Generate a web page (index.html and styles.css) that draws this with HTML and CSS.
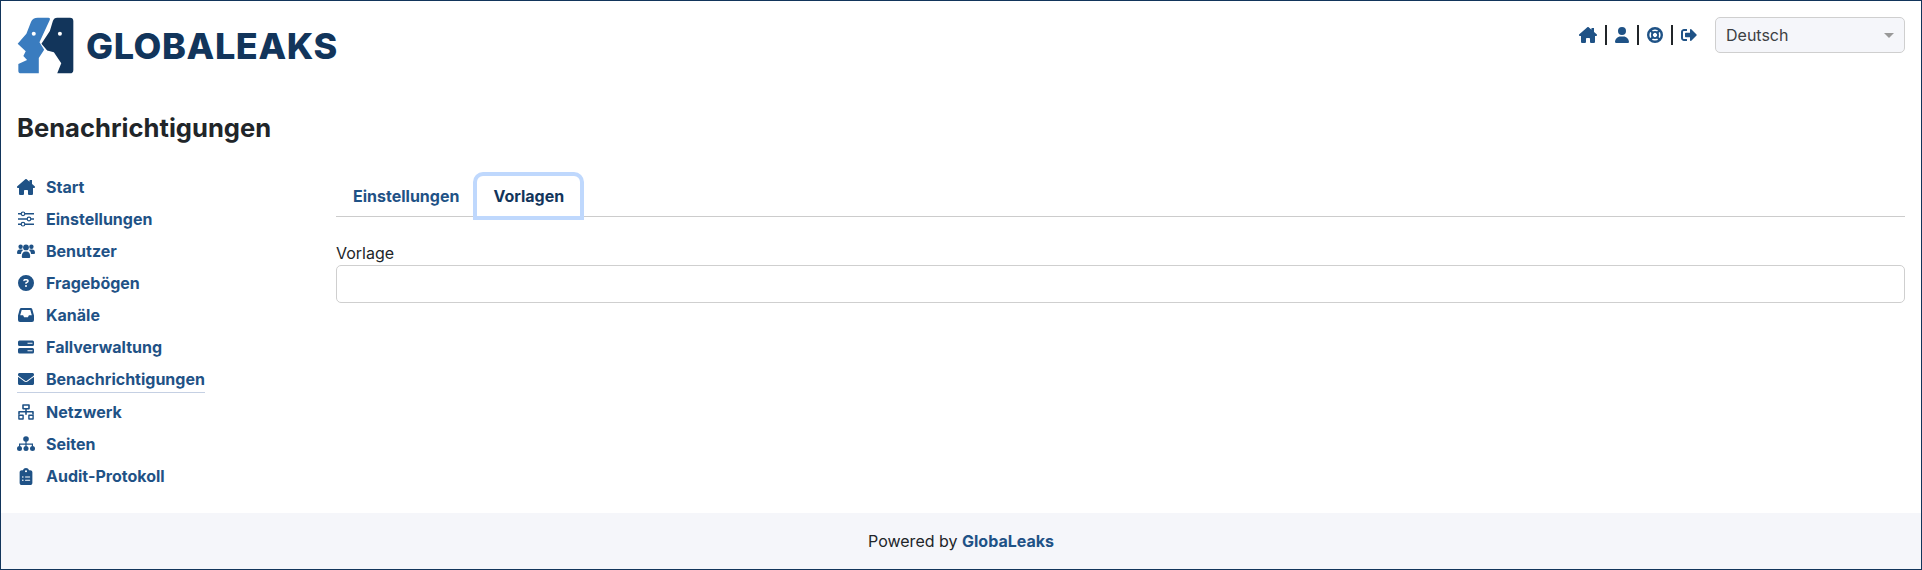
FILE: index.html
```html
<!DOCTYPE html>
<html lang="de">

<head>
    <meta charset="UTF-8">
    <meta name="viewport" content="width=device-width, initial-scale=1.0">
    <title>GlobaLeaks</title>
    <link rel="stylesheet" href="styles.css">
</head>

<body>
    <div class="page">
        <header class="topbar">
            <div class="brand">
                <svg class="brand-mark" viewBox="50 50 170 170">
                    <path fill="#3a7cbf" d="M112 52H144Q150 52 148 58L117 125L131 148L115 172V218H62Q54 218 54 210V190L80 178L69 166L76 152L52 130L78 100L92 64Q97 52 112 52Z"/>
                    <path fill="#12355b" d="M170 52H208Q218 52 218 62V208Q218 218 208 218H170L182 188L170 170L160 155L140 150L123 130L148 92L157 62Q160 52 170 52Z"/>
                    <circle cx="100" cy="100" r="6" fill="#fff"/>
                    <circle cx="178" cy="100" r="6" fill="#fff"/>
                </svg>
                <span class="brand-name">GLOBALEAKS</span>
            </div>
            <div class="topbar-right">
                <nav class="user-links">
                    <svg class="ico ico-home" viewBox="0 0 576 512"><path d="M400 32h80v140h-80zM575.800 255.500c0 18-15 32.100-32 32.100h-32l.7 160.200c0 2.700-.2 5.400-.5 8.100V472c0 22.100-17.900 40-40 40H456c-1.100 0-2.200 0-3.300-.1c-1.400 .1-2.800 .1-4.200 .1H416 392c-22.100 0-40-17.900-40-40V448 384c0-17.700-14.300-32-32-32H256c-17.700 0-32 14.300-32 32v64 24c0 22.100-17.900 40-40 40H160 128.100c-1.500 0-3-.1-4.500-.2c-1.200 .1-2.400 .2-3.600 .2H104c-22.100 0-40-17.900-40-40V360c0-.9 0-1.900 .1-2.800V287.600H32c-18 0-32-14-32-32.100c0-9 3-17 10-24L266.400 8c7-7 15-8 22-8s15 2 21 7L564.800 231.500c8 7 12 15 11 24z"/></svg>
                    <span class="sep"></span>
                    <svg class="ico ico-user" viewBox="0 0 448 512"><path d="M224 256A128 128 0 1 0 224 0a128 128 0 1 0 0 256zm-45.700 48C79.800 304 0 383.800 0 482.300C0 498.700 13.300 512 29.700 512H418.300c16.400 0 29.700-13.300 29.700-29.700C448 383.800 368.200 304 269.700 304H178.300z"/></svg>
                    <span class="sep"></span>
                    <svg class="ico ico-ring" viewBox="0 0 16 16"><circle cx="8" cy="8" r="6.800" fill="none" stroke="currentColor" stroke-width="2.400"/><circle cx="8" cy="8" r="3.100" fill="none" stroke="currentColor" stroke-width="1.800"/><path d="M2.600 4.400 4.400 2.600 7 6 6 7ZM13.400 4.400 11.600 2.600 9 6 10 7ZM2.600 11.600 4.400 13.400 7 10 6 9ZM13.400 11.600 11.600 13.400 9 10 10 9Z"/></svg>
                    <span class="sep"></span>
                    <svg class="ico ico-out" viewBox="0 0 512 512"><path d="M497 273L329 441c-15 15-41 4.500-41-17v-96H152c-13.300 0-24-10.700-24-24v-96c0-13.300 10.700-24 24-24h136V88c0-21.400 25.900-32 41-17l168 168c9.300 9.400 9.300 24.600 0 34zM192 436v-40c0-6.600-5.400-12-12-12H96c-17.700 0-32-14.300-32-32V160c0-17.700 14.300-32 32-32h84c6.600 0 12-5.400 12-12V76c0-6.600-5.400-12-12-12H96c-53 0-96 43-96 96v192c0 53 43 96 96 96h84c6.600 0 12-5.400 12-12z"/></svg>
                </nav>
                <div class="lang-select">
                    <span>Deutsch</span>
                    <i class="caret"></i>
                </div>
            </div>
        </header>

        <h1 class="page-title">Benachrichtigungen</h1>

        <main class="content">
            <ul class="sidebar">
                <li><a href="#"><svg class="side-ico" viewBox="0 0 576 512"><path d="M400 32h80v140h-80zM575.800 255.500c0 18-15 32.100-32 32.100h-32l.7 160.200c0 2.700-.2 5.400-.5 8.100V472c0 22.100-17.900 40-40 40H456c-1.100 0-2.200 0-3.300-.1c-1.400 .1-2.800 .1-4.200 .1H416 392c-22.100 0-40-17.900-40-40V448 384c0-17.700-14.300-32-32-32H256c-17.700 0-32 14.300-32 32v64 24c0 22.100-17.900 40-40 40H160 128.100c-1.500 0-3-.1-4.500-.2c-1.200 .1-2.400 .2-3.600 .2H104c-22.100 0-40-17.900-40-40V360c0-.9 0-1.900 .1-2.800V287.600H32c-18 0-32-14-32-32.100c0-9 3-17 10-24L266.400 8c7-7 15-8 22-8s15 2 21 7L564.800 231.500c8 7 12 15 11 24z"/></svg>Start</a></li>
                <li><a href="#"><svg class="side-ico" viewBox="0 0 16 16"><path d="M0 2h16v1.600H0zM0 7.200h16v1.600H0zM0 12.400h16v1.600H0z"/><circle cx="5" cy="2.800" r="1.800" fill="#fff" stroke="currentColor" stroke-width="1.200"/><circle cx="11" cy="8" r="1.800" fill="#fff" stroke="currentColor" stroke-width="1.200"/><circle cx="5" cy="13.200" r="1.800" fill="#fff" stroke="currentColor" stroke-width="1.200"/></svg>Einstellungen</a></li>
                <li><a href="#"><svg class="side-ico" viewBox="0 0 18 16"><circle cx="3.600" cy="3.800" r="2.200"/><circle cx="14.400" cy="3.800" r="2.200"/><circle cx="9" cy="4.400" r="2.900"/><path d="M0 10q0-3.400 3-3.400h2q.6 0 1 .3-2 1.400-2.100 4.100H1q-1 0-1-1ZM18 10q0-3.400-3-3.400h-2q-.6 0-1 .3 2 1.400 2.100 4.100H17q1 0 1-1ZM4.800 14q0-5.500 3.700-5.500h1q3.700 0 3.700 5.500 0 1-1 1H5.800q-1 0-1-1Z"/></svg>Benutzer</a></li>
                <li><a href="#"><svg class="side-ico" viewBox="0 0 512 512"><path d="M256 512A256 256 0 1 0 256 0a256 256 0 1 0 0 512zM169.800 165.300c7.900-22.300 29.100-37.300 52.800-37.300h58.300c34.900 0 63.100 28.300 63.100 63.100c0 22.600-12.100 43.500-31.700 54.800L280 264.400c-.2 13-10.900 23.600-24 23.600c-13.300 0-24-10.700-24-24V250.500c0-8.600 4.600-16.500 12.100-20.800l44.300-25.400c4.700-2.700 7.600-7.700 7.600-13.100c0-8.400-6.800-15.100-15.100-15.100H222.600c-3.400 0-6.400 2.100-7.500 5.300l-.4 1.200c-4.400 12.500-18.200 19-30.600 14.600s-19-18.200-14.600-30.600l.4-1.200zM224 352a32 32 0 1 1 64 0 32 32 0 1 1 -64 0z"/></svg>Fragebögen</a></li>
                <li><a href="#"><svg class="side-ico" viewBox="0 0 16 16"><path fill-rule="evenodd" d="M3.300 1h9.400q1.100 0 1.500 1L16 8.500v4.500q0 2-2 2H2q-2 0-2-2V8.500L1.800 2q.4-1 1.500-1ZM3.700 3 2.200 8.300h2.900l1 1.900h3.800l1-1.900h2.900L12.300 3Z"/></svg>Kanäle</a></li>
                <li><a href="#"><svg class="side-ico" viewBox="0 0 16 16"><path fill-rule="evenodd" d="M1.500 1.500h13q1.500 0 1.500 1.500v2.500q0 1.500-1.500 1.500h-13Q0 7 0 5.500V3q0-1.500 1.500-1.500Zm8 2.200v1.100h5V3.700ZM1.500 9h13q1.500 0 1.500 1.500V13q0 1.500-1.500 1.500h-13Q0 14.500 0 13v-2.500Q0 9 1.500 9Zm8 2.200v1.100h5v-1.100Z"/></svg>Fallverwaltung</a></li>
                <li class="active"><a href="#"><svg class="side-ico" viewBox="0 0 512 512"><path d="M502.300 190.800c3.900-3.100 9.700-.2 9.700 4.700V400c0 26.500-21.500 48-48 48H48c-26.500 0-48-21.500-48-48V195.600c0-5 5.700-7.800 9.700-4.700 22.400 17.400 52.100 39.500 154.100 113.600 21.100 15.400 56.700 47.800 92.200 47.600 35.700.3 72-32.800 92.300-47.600 102-74.100 131.600-96.300 154-113.700zM256 320c23.200.4 56.600-29.200 73.400-41.400 132.700-96.300 142.800-104.700 173.400-128.700 5.800-4.500 9.200-11.500 9.200-18.900v-19c0-26.500-21.500-48-48-48H48C21.500 64 0 85.500 0 112v19c0 7.400 3.400 14.300 9.200 18.900 30.600 23.900 40.700 32.400 173.400 128.700 16.800 12.200 50.200 41.800 73.400 41.400z"/></svg>Benachrichtigungen</a></li>
                <li><a href="#"><svg class="side-ico" viewBox="0 0 16 16"><path fill-rule="evenodd" d="M5 .2h6q.8 0 .8.8v3.600q0 .8-.8.8H8.800v1.600H15q.8 0 .8.8v2.900h-1.600V8.600H8.800v2.100H7.200V8.600H1.800v2.100H.2V7.800q0-.8.8-.8h6.200V5.400H5q-.8 0-.8-.8V1q0-.8.800-.8Zm.8 1.500v2.200h4.400V1.700ZM1 10.500h4q.8 0 .8.800v3.600q0 .8-.8.8H1q-.8 0-.8-.8v-3.600q0-.8.8-.8Zm.6 1.500v2.200h2.800V12ZM11 10.500h4q.8 0 .8.800v3.600q0 .8-.8.8h-4q-.8 0-.8-.8v-3.600q0-.8.800-.8Zm.6 1.500v2.200h2.800V12Z"/></svg>Netzwerk</a></li>
                <li><a href="#"><svg class="side-ico" viewBox="0 0 18 16"><circle cx="9" cy="3" r="2.800"/><circle cx="2.500" cy="12.500" r="2.500"/><circle cx="9" cy="12.500" r="2.500"/><circle cx="15.500" cy="12.500" r="2.500"/><path d="M8.400 5h1.200v2.600H16v3h-1.200V8.800H9.600v1.800H8.400V8.800H3.200v1.800H2v-3h6.400Z"/></svg>Seiten</a></li>
                <li><a href="#"><svg class="side-ico side-ico-clip" viewBox="0 0 384 512"><path d="M192 0c-41.800 0-77.400 26.700-90.500 64H64C28.700 64 0 92.700 0 128V448c0 35.300 28.700 64 64 64H320c35.300 0 64-28.700 64-64V128c0-35.300-28.700-64-64-64H282.500C269.400 26.700 233.800 0 192 0zm0 64a32 32 0 1 1 0 64 32 32 0 1 1 0-64zM72 272a24 24 0 1 1 48 0 24 24 0 1 1 -48 0zm104-16H304c8.800 0 16 7.200 16 16s-7.200 16-16 16H176c-8.800 0-16-7.200-16-16s7.200-16 16-16zM72 368a24 24 0 1 1 48 0 24 24 0 1 1 -48 0zm88 0c0-8.800 7.200-16 16-16H304c8.800 0 16 7.200 16 16s-7.200 16-16 16H176c-8.800 0-16-7.200-16-16z"/></svg>Audit-Protokoll</a></li>
            </ul>

            <section class="panel">
                <div class="tabs">
                    <a class="tab" href="#">Einstellungen</a>
                    <a class="tab tab-active" href="#">Vorlagen</a>
                </div>
                <label class="field-label">Vorlage</label>
                <div class="field-box"></div>
            </section>
        </main>

        <footer class="footer">Powered by&nbsp;<a href="#">GlobaLeaks</a></footer>
    </div>
</body>

</html>
```

FILE: styles.css
```css
* {
    box-sizing: border-box;
}

body {
    margin: 0;
    font-family: Inter, "Noto Sans", sans-serif;
    font-size: 16px;
    color: #212529;
    background-color: #fff;
}

a {
    color: #1f5286;
    text-decoration: none;
}

.page {
    height: 100vh;
    border: 1px solid #12355b;
    display: flex;
    flex-direction: column;
}

.topbar {
    display: flex;
    justify-content: space-between;
    align-items: flex-start;
    padding: 16px 16px 0;
    height: 90px;
}

.brand {
    display: flex;
    align-items: center;
    gap: 12px;
}

.brand-mark {
    width: 57px;
    height: 57px;
}

.brand-name {
    font-size: 36px;
    font-weight: 800;
    color: #12355b;
    letter-spacing: 0.6px;
}

.topbar-right {
    display: flex;
    align-items: center;
}

.user-links {
    display: flex;
    align-items: center;
    color: #1f5286;
    margin-right: 18px;
}

.ico {
    display: block;
    fill: currentColor;
    height: 16px;
}

.ico-home {
    width: 18px;
}

.ico-user {
    width: 14px;
}

.ico-ring {
    width: 16px;
}

.ico-out {
    width: 16px;
}

.sep {
    width: 2px;
    height: 20px;
    margin: 0 8px;
    background-color: #212529;
}

.lang-select {
    width: 190px;
    height: 36px;
    border: 1px solid #cfcfcf;
    border-radius: 5px;
    background-color: #f5f6fa;
    display: flex;
    align-items: center;
    justify-content: space-between;
    padding: 0 10px;
    color: #3c4043;
}

.caret {
    width: 0;
    height: 0;
    border-left: 5px solid transparent;
    border-right: 5px solid transparent;
    border-top: 5px solid #999;
}

.page-title {
    margin: 0;
    padding: 21px 16px 0;
    height: 78px;
    font-size: 25.6px;
    font-weight: 700;
    line-height: 32px;
    color: #212529;
}

.content {
    flex: 1;
    display: flex;
    padding: 0 16px;
}

.sidebar {
    list-style: none;
    margin: 0;
    padding: 2px 0 0;
    width: 319px;
}

.sidebar li {
    height: 32px;
    display: flex;
    align-items: center;
}

.sidebar a {
    display: flex;
    align-items: center;
    font-weight: 700;
    fill: currentColor;
    height: 24px;
}

.sidebar li.active {
    height: 33px;
}

.sidebar li.active a {
    border-bottom: 1px solid #c5d0e3;
    height: 27px;
}

.side-ico {
    width: 18px;
    height: 16px;
    margin-right: 11px;
    flex-shrink: 0;
}

.side-ico-clip {
    height: 17px;
}

.panel {
    flex: 1;
    padding-top: 7px;
}

.tabs {
    display: flex;
    align-items: flex-end;
    height: 41px;
    border-bottom: 1px solid #ccc;
    font-weight: 700;
}

.tab {
    display: block;
    height: 40px;
    line-height: 40px;
    padding: 0 17px;
}

.tab-active {
    color: #12355b;
    margin-left: 1px;
    padding: 0 16px;
    border-radius: 6px 6px 0 0;
    box-shadow: 0 0 0 4px #bfd8fd;
}

.field-label {
    display: block;
    margin-top: 24px;
    height: 24px;
    line-height: 24px;
}

.field-box {
    height: 38px;
    border: 1px solid #cfcfcf;
    border-radius: 5px;
}

.footer {
    height: 56px;
    background-color: #f5f6fa;
    display: flex;
    justify-content: center;
    align-items: center;
}

.footer a {
    font-weight: 700;
}
```
